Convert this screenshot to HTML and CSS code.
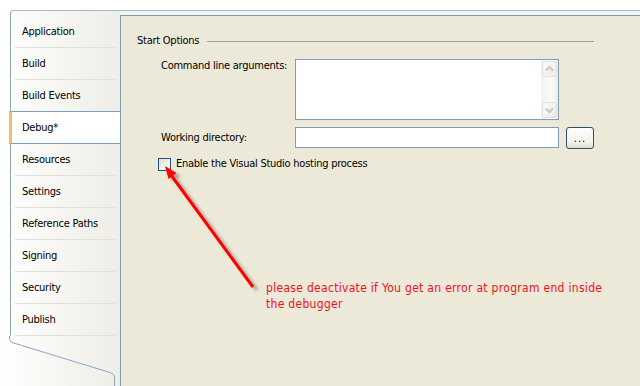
FILE: index.html
```html
<!DOCTYPE html>
<html>
<head>
<meta charset="utf-8">
<link rel="stylesheet" href="styles.css">
</head>
<body>
<div class="page">
  <div class="left">
    <div class="sidebar">
      <div class="tab">Application</div>
      <div class="tab">Build</div>
      <div class="tab">Build Events</div>
      <div class="tab active">Debug*</div>
      <div class="tab">Resources</div>
      <div class="tab">Settings</div>
      <div class="tab">Reference Paths</div>
      <div class="tab">Signing</div>
      <div class="tab">Security</div>
      <div class="tab">Publish</div>
    </div>
    <svg class="tail" width="111" height="50" viewBox="0 0 111 50">
      <path d="M0.5 0 V2 Q0.5 6 4 6.8 L101 36.5 Q105.5 38 105.5 42 V50" fill="none" stroke="#8ea6bd" stroke-width="1"/>
    </svg>
  </div>
  <div class="right">
    <div class="panel">
      <div class="group-head"><span>Start Options</span><span class="rule"></span></div>
      <div class="row">
        <div class="label">Command line arguments:</div>
        <div class="textarea">
          <div class="text-space"></div>
          <div class="vscroll">
            <div class="sbtn"><svg width="13" height="14" viewBox="0 0 13 14"><path d="M3 8.5 L6.5 5 L10 8.5" fill="none" stroke="#cac8bb" stroke-width="2"/></svg></div>
            <div class="track"></div>
            <div class="sbtn"><svg width="13" height="14" viewBox="0 0 13 14"><path d="M3 5.5 L6.5 9 L10 5.5" fill="none" stroke="#cac8bb" stroke-width="2"/></svg></div>
          </div>
        </div>
      </div>
      <div class="row row2">
        <div class="label label-mid">Working directory:</div>
        <div class="input"></div>
        <div class="browse">...</div>
      </div>
      <div class="check-row">
        <span class="checkbox"></span>
        <span>Enable the Visual Studio hosting process</span>
      </div>
    </div>
  </div>
  <svg class="overlay" width="640" height="386" viewBox="0 0 640 386">
    <defs>
      <filter id="sh" x="-20%" y="-20%" width="150%" height="150%">
        <feDropShadow dx="4" dy="3" stdDeviation="1.6" flood-color="#000" flood-opacity="0.3"/>
      </filter>
    </defs>
    <g filter="url(#sh)">
      <line x1="253" y1="287" x2="171" y2="175" stroke="#ff0000" stroke-width="3"/>
      <polygon points="165,166 176.5,173 168.5,179" fill="#ff0000"/>
    </g>
  </svg>
  <div class="note">please deactivate if You get an error at program end inside<br>the debugger</div>
</div>
</body>
</html>
```
FILE: styles.css
```css
html, body {
  margin: 0;
  padding: 0;
}
body {
  width: 640px;
  height: 386px;
  overflow: hidden;
  background: #ffffff;
  font-family: "DejaVu Sans Condensed", "Liberation Sans", Arial, sans-serif;
  font-size: 11px;
  letter-spacing: -0.25px;
  color: #000;
}
.page {
  position: relative;
  display: flex;
  width: 640px;
  height: 386px;
}
.left {
  width: 120px;
  flex: none;
  box-sizing: border-box;
  padding: 10px 0 0 10px;
  display: flex;
  flex-direction: column;
  background:
    linear-gradient(#ffffff, #ffffff) no-repeat 0 0 / 100% 10px,
    linear-gradient(90deg, #ffffff 0%, #fbfbf9 20%, #eeede6 100%);
}
.sidebar {
  border-top: 1px solid #a3b7cb;
  border-left: 1px solid #8ea6bd;
  border-top-left-radius: 4px;
  padding-top: 5px;
  display: flex;
  flex-direction: column;
}
.tab {
  height: 32px;
  box-sizing: border-box;
  padding: 0 0 1px 11px;
  line-height: 31px;
  background: linear-gradient(#e2e1d9, #e2e1d9) no-repeat 4px 100% / 100px 1px;
  white-space: nowrap;
}
.tab.active {
  height: 33px;
  margin-top: -1px;
  margin-left: -2px;
  padding: 0 0 0 10px;
  border-top: 1px solid #7f9db9;
  border-bottom: 1px solid #7f9db9;
  border-left: 3px solid #f3bf68;
  background: #ffffff;
  line-height: 31px;
}
.tail {
  display: block;
  margin-left: -1px;
  flex: none;
}
.right {
  flex: 1;
  margin-top: 10px;
  border-top: 1px solid #a3b7cb;
  padding-top: 4px;
  background: #f4f4ef;
  display: flex;
  flex-direction: column;
}
.panel {
  flex: 1;
  border-top: 1px solid #7f9db9;
  border-left: 1px solid #7f9db9;
  background: #ece9d8;
  padding: 18px 46px 0 16px;
}
.group-head {
  display: flex;
  align-items: center;
  height: 14px;
  line-height: 14px;
}
.rule {
  flex: 1;
  height: 1px;
  margin-left: 8px;
  background: #a8a696;
}
.row {
  display: flex;
  align-items: flex-start;
  padding-left: 24px;
  margin-top: 11px;
}
.row2 {
  margin-top: 7px;
}
.label {
  width: 134px;
  flex: none;
  line-height: 14px;
}
.label-mid {
  line-height: 21px;
}
.textarea {
  width: 264px;
  height: 61px;
  box-sizing: border-box;
  border: 1px solid #7f9db9;
  background: #ffffff;
  display: flex;
}
.text-space {
  flex: 1;
}
.vscroll {
  width: 17px;
  box-sizing: border-box;
  padding: 1px;
  display: flex;
  flex-direction: column;
  background: linear-gradient(90deg, #f3f2ee, #fbfbf9 60%, #eeede7);
}
.sbtn {
  height: 16px;
  box-sizing: border-box;
  border: 1px solid #e4e2d8;
  border-radius: 2px;
  background: linear-gradient(135deg, #fbfbf8, #ecebe4);
  display: flex;
  align-items: center;
  justify-content: center;
}
.track {
  flex: 1;
}
.input {
  width: 264px;
  height: 21px;
  box-sizing: border-box;
  border: 1px solid #7f9db9;
  background: #ffffff;
}
.browse {
  width: 28px;
  height: 22px;
  box-sizing: border-box;
  margin-left: 7px;
  border: 1px solid #2f4f6e;
  border-radius: 3px;
  background: linear-gradient(#ffffff, #f4f3ee 70%, #dcd9cc);
  text-align: center;
  line-height: 22px;
  font-size: 11px;
  letter-spacing: 1px;
}
.check-row {
  display: flex;
  align-items: center;
  padding-left: 21px;
  margin-top: 8px;
  height: 14px;
  line-height: 14px;
}
.checkbox {
  width: 13px;
  height: 13px;
  box-sizing: border-box;
  border: 1px solid #1c5180;
  background: linear-gradient(135deg, #dcdbd4, #f6f6f3 70%, #ffffff);
  margin-right: 5px;
  flex: none;
}
.overlay {
  position: absolute;
  left: 0;
  top: 0;
  pointer-events: none;
}
.note {
  position: absolute;
  left: 266px;
  top: 280px;
  font-size: 12px;
  letter-spacing: 0.3px;
  line-height: 16px;
  color: #f2101c;
  white-space: nowrap;
}
```
